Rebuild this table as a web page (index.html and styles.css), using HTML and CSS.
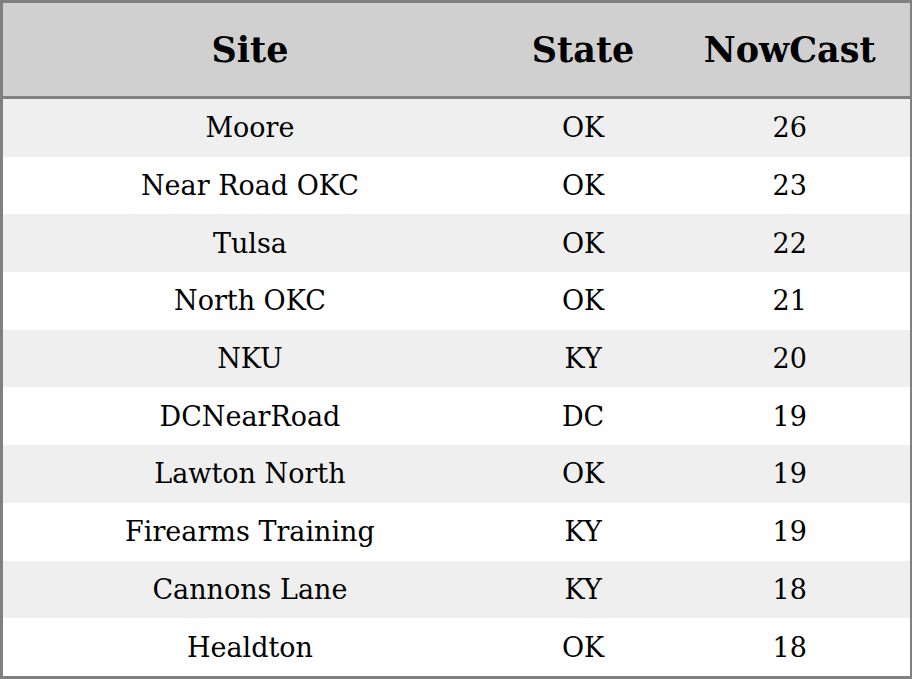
FILE: index.html
```html
<!DOCTYPE html>
<html>
<head>
<meta charset="utf-8">
<link rel="stylesheet" href="styles.css">
</head>
<body>
<table class="aq">
  <colgroup>
    <col class="c-site">
    <col class="c-state">
    <col class="c-now">
  </colgroup>
  <thead>
    <tr><th>Site</th><th>State</th><th>NowCast</th></tr>
  </thead>
  <tbody>
    <tr><td>Moore</td><td>OK</td><td>26</td></tr>
    <tr><td>Near Road OKC</td><td>OK</td><td>23</td></tr>
    <tr><td>Tulsa</td><td>OK</td><td>22</td></tr>
    <tr><td>North OKC</td><td>OK</td><td>21</td></tr>
    <tr><td>NKU</td><td>KY</td><td>20</td></tr>
    <tr><td>DCNearRoad</td><td>DC</td><td>19</td></tr>
    <tr><td>Lawton North</td><td>OK</td><td>19</td></tr>
    <tr><td>Firearms Training</td><td>KY</td><td>19</td></tr>
    <tr><td>Cannons Lane</td><td>KY</td><td>18</td></tr>
    <tr><td>Healdton</td><td>OK</td><td>18</td></tr>
  </tbody>
</table>
</body>
</html>
```

FILE: styles.css
```css
html, body {
  margin: 0;
  padding: 0;
  background: #ffffff;
  overflow: hidden;
}
.aq {
  width: 912px;
  box-sizing: border-box;
  border-collapse: collapse;
  border-style: solid;
  border-color: #808080;
  border-width: 3px 2px 3px 3px;
  font-family: "DejaVu Serif", serif;
  color: #000;
  table-layout: fixed;
}
.c-site { width: 494px; }
.c-state { width: 172px; }
.c-now { width: 241px; }
.aq th {
  background: #d0d0d0;
  height: 93px;
  padding: 0;
  font-size: 35px;
  font-weight: bold;
  text-align: center;
  border-bottom: 3px solid #808080;
}
.aq td {
  height: 57.7px;
  padding: 0;
  font-size: 27px;
  text-align: center;
}
.aq tbody tr:nth-child(odd) td {
  background: #efefef;
}
```
